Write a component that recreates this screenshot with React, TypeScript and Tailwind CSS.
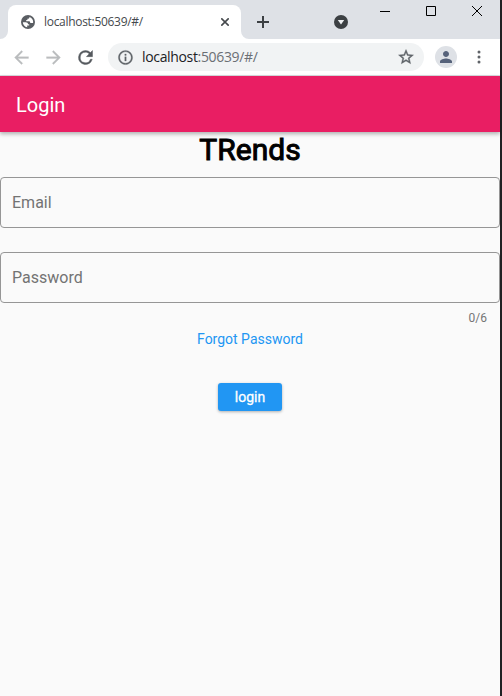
import type { ReactNode } from 'react';

function Icon({ d, className, weight = 0 }: { d: string; className: string; weight?: number }) {
  return (
    <svg viewBox="0 0 24 24" className={`shrink-0 ${className}`} fill="currentColor" stroke="currentColor" strokeWidth={weight}>
      <path d={d} />
    </svg>
  );
}

const BACK = 'M20 11H7.83l5.59-5.59L12 4l-8 8 8 8 1.41-1.41L7.83 13H20v-2z';
const FORWARD = 'M12 4l-1.41 1.41L16.17 11H4v2h12.17l-5.58 5.59L12 20l8-8z';
const RELOAD =
  'M17.65 6.35A7.96 7.96 0 0 0 12 4a8 8 0 1 0 7.73 10h-2.08A6 6 0 1 1 12 6c1.66 0 3.14.69 4.22 1.78L13 11h7V4l-2.35 2.35z';
const INFO =
  'M11 7h2v2h-2zm0 4h2v6h-2zm1-9C6.48 2 2 6.48 2 12s4.480 10 10 10 10-4.480 10-10S17.520 2 12 2zm0 18c-4.410 0-8-3.590-8-8s3.590-8 8-8 8 3.590 8 8-3.590 8-8 8z';
const STAR =
  'M22 9.240l-7.190-.620L12 2 9.190 8.630 2 9.240l5.460 4.730L5.820 21 12 17.270 18.180 21l-1.630-7.030L22 9.240zM12 15.400l-3.760 2.270 1-4.280-3.320-2.880 4.380-.380L12 6.100l1.710 4.040 4.380.380-3.320 2.880 1 4.280L12 15.400z';
const PERSON =
  'M12 12c2.210 0 4-1.790 4-4s-1.790-4-4-4-4 1.790-4 4 1.790 4 4 4zm0 2c-2.670 0-8 1.340-8 4v2h16v-2c0-2.660-5.330-4-8-4z';

function TabStrip() {
  return (
    <div className="flex h-[39px] items-start bg-[#dee1e6]">
      <svg className="mt-[31px] h-2 w-2 shrink-0" viewBox="0 0 8 8">
        <path d="M8 0v8H0a8 8 0 0 0 8-8z" fill="#fff" />
      </svg>
      <div className="mt-[5px] flex h-[34px] w-[233px] shrink-0 items-center rounded-t-lg bg-white pl-[13px] pr-3">
        <svg viewBox="0 0 14 14" className="h-[14px] w-[14px] shrink-0">
          <circle cx="7" cy="7" r="7" fill="#5a5e63" />
          <path
            d="M1.800 7.300L4.600 7.300C6.200 7.300 7 8 7 9.200L8.200 9.200L8.200 10.500L6.200 10.500L6.200 12.200C3.800 11.900 1.900 10 1.800 7.300z"
            fill="#fff"
          />
          <path
            d="M8.400 1.900L8.400 2.500C8.400 3.500 7.700 3.700 6.400 3.700L6.400 5.100L5.200 5.100L5.200 6.300L8.600 6.300L9.400 8.100L11.600 8.100C11.900 8.100 12.100 7.900 12.200 7.300C12.300 4.800 10.700 2.500 8.400 1.900z"
            fill="#fff"
          />
        </svg>
        <span className="ml-[9px] whitespace-nowrap font-['Open_Sans',sans-serif] text-[12px] leading-4 tracking-[-0.3px] text-[#45494d]">
          localhost:50639/#/
        </span>
        <svg viewBox="0 0 8 8" className="ml-auto h-2 w-2 shrink-0" stroke="#45494d" strokeWidth="1.600">
          <path d="M.3.3l7.400 7.400M7.700.3L.3 7.700" />
        </svg>
      </div>
      <svg className="mt-[31px] h-2 w-2 shrink-0" viewBox="0 0 8 8">
        <path d="M0 0v8h8a8 8 0 0 1-8-8z" fill="#fff" />
      </svg>
      <svg viewBox="0 0 12 12" className="ml-2 mt-4 h-3 w-3 shrink-0" stroke="#3c4043" strokeWidth="2">
        <path d="M6 0v12M0 6h12" />
      </svg>
      <svg viewBox="0 0 14 14" className="ml-[65px] mt-[15px] h-[14px] w-[14px] shrink-0">
        <circle cx="7" cy="7" r="7" fill="#3c4043" />
        <path d="M3.800 5h6.400L7 9.500z" fill="#eef0f2" />
      </svg>
      <div className="ml-8 mt-[6px] flex gap-9 text-black">
        <svg viewBox="0 0 10 10" className="h-[10px] w-[10px]" stroke="currentColor" fill="none">
          <path d="M0 5.500h10" />
        </svg>
        <svg viewBox="0 0 10 10" className="h-[10px] w-[10px]" stroke="currentColor" fill="none">
          <path d="M.5.5h9v9h-9z" />
        </svg>
        <svg viewBox="0 0 10 10" className="h-[10px] w-[10px]" stroke="currentColor" fill="none">
          <path d="M0 0l10 10M10 0L0 10" />
        </svg>
      </div>
    </div>
  );
}

function Toolbar() {
  return (
    <div className="box-content flex h-9 items-center border-b border-[#d9dbde] bg-white pl-[11px]">
      <Icon d={BACK} weight={0.3} className="h-[21px] w-[21px] text-[#babcbe]" />
      <Icon d={FORWARD} weight={0.3} className="ml-[11px] h-[21px] w-[21px] text-[#babcbe]" />
      <Icon d={RELOAD} weight={0.5} className="ml-[11px] h-[21px] w-[21px] text-[#55595e]" />
      <div className="ml-3 flex h-7 w-[316px] shrink-0 items-center rounded-full bg-[#f1f3f4] px-[9px]">
        <Icon d={INFO} weight={0.4} className="h-[17px] w-[17px] text-[#5f6368]" />
        <span className="ml-2 whitespace-nowrap font-['Open_Sans',sans-serif] text-[14px] leading-5 tracking-[-0.34px] text-[#202124]">
          localhost<span className="text-[#6b6f74]">:50639/#/</span>
        </span>
        <Icon d={STAR} weight={0.5} className="ml-auto h-[18px] w-[18px] text-[#5f6368]" />
      </div>
      <div className="ml-[11px] flex h-[22px] w-[22px] shrink-0 items-center justify-center rounded-full bg-[#dee1e6]">
        <Icon d={PERSON} className="h-[18px] w-[18px] text-[#56627a]" />
      </div>
      <svg viewBox="0 0 4 14" className="ml-5 h-[14px] w-1 shrink-0" fill="#5f6368">
        <circle cx="2" cy="2" r="1.500" />
        <circle cx="2" cy="7" r="1.500" />
        <circle cx="2" cy="12" r="1.500" />
      </svg>
    </div>
  );
}

function Field({ children }: { children: ReactNode }) {
  return (
    <div className="flex h-[51px] items-center rounded-[4px] border border-[#969696] px-[11px] text-[16px] text-[#737373]">
      {children}
    </div>
  );
}

export default function App() {
  return (
    <div className="flex h-[696px] w-[502px] overflow-hidden bg-[#202123]">
      <div className="flex w-[500px] flex-col bg-[#fafafa] font-['Roboto',sans-serif]">
        <TabStrip />
        <Toolbar />
        <header className="flex h-14 shrink-0 items-center bg-[#e91e63] px-4 text-[20px] font-normal text-white shadow-[0_2px_4px_rgba(0,0,0,0.3)]">
          <span className="pt-px">Login</span>
        </header>
        <main className="flex flex-col">
          <h1 className="h-[45px] text-center text-[30px] font-normal leading-[36px] text-black [-webkit-text-stroke:1px_black]">TRends</h1>
          <Field>Email</Field>
          <div className="h-6" />
          <Field>Password</Field>
          <div className="mt-2 pr-[13px] text-right text-[12px] leading-[14px] text-[#757575]">0/6</div>
          <a className="mt-[6px] self-center text-[14px] font-normal leading-4 text-[#2196f3]">Forgot Password</a>
          <button className="mt-9 h-7 w-16 self-center rounded-[3px] bg-[#2196f3] text-[14px] font-normal text-white shadow-[0_1px_3px_rgba(0,0,0,0.3)] [-webkit-text-stroke:0.3px_white]">
            login
          </button>
        </main>
      </div>
    </div>
  );
}
